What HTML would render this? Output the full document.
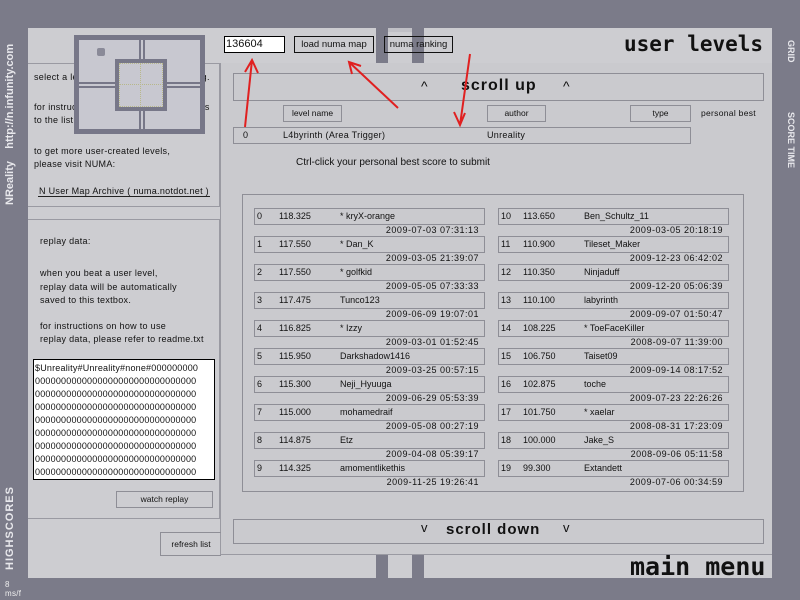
<!DOCTYPE html>
<html><head><meta charset="utf-8"><style>
*{margin:0;padding:0;box-sizing:border-box}
body{width:800px;height:600px;overflow:hidden;background:#7b7b89;position:relative;font-family:"Liberation Sans",sans-serif;color:#111;font-size:9px}
.a{position:absolute}
.p{background:#cdcdd1}
.bx{position:absolute;border:1px solid #8e8e96}
.t{position:absolute;white-space:nowrap;font-size:9px;letter-spacing:.3px}
.btn{position:absolute;border:1px solid #8e8e96;text-align:center;font-size:8.5px;line-height:15px}
.row{position:absolute;border:1px solid #8e8e96;height:17px;width:231px;font-size:9px;line-height:15px}
.row span{position:absolute}
.d{position:absolute;font-size:9px;text-align:right;width:225px;letter-spacing:.5px}
.vt{position:absolute;color:#e8e8ec;font-weight:bold;white-space:nowrap;transform-origin:0 0}
</style></head><body>
<div class="a p" style="left:28px;top:28px;width:744px;height:550px"></div>
<div class="a" style="left:220px;top:63px;width:552px;height:1px;background:#9a9aa2"></div>
<div class="a" style="left:376px;top:28px;width:12px;height:35px;background:#7b7b89"></div>
<div class="a" style="left:412px;top:28px;width:12px;height:35px;background:#7b7b89"></div>
<div class="a" style="left:388px;top:28px;width:24px;height:35px;background:#cdcdd1;border-top:4px solid #c0c0c6"></div>
<div class="a" style="left:220px;top:63px;width:552px;height:492px;background:#cacace;border-bottom:1px solid #9a9aa2;border-left:1px solid #9a9aa2"></div>
<div class="a" style="left:376px;top:555px;width:12px;height:23px;background:#7b7b89"></div>
<div class="a" style="left:412px;top:555px;width:12px;height:23px;background:#7b7b89"></div>
<div class="a" style="left:28px;top:63px;width:192px;height:144px;border-top:1px solid #9a9aa2;border-bottom:1px solid #9a9aa2;border-right:1px solid #9a9aa2"></div>
<div class="a" style="left:28px;top:219px;width:192px;height:300px;border-top:1px solid #9a9aa2;border-bottom:1px solid #9a9aa2;border-right:1px solid #9a9aa2"></div>

<div class="t" style="left:34px;top:72px">select a level from the list before playing.</div>
<div class="t" style="left:34px;top:102px">for instructions on how to add user levels</div>
<div class="t" style="left:34px;top:115px">to the list, refer to readme.txt</div>
<div class="t" style="left:34px;top:146px">to get more user-created levels,</div>
<div class="t" style="left:34px;top:159px">please visit NUMA:</div>
<div class="t" style="left:38px;top:186px;border-bottom:1px solid #222;padding:0 1px">N User Map Archive ( numa.notdot.net )</div>

<!-- minimap -->
<div class="a" style="left:74px;top:35px;width:131px;height:99px;background:#c8c8d0;border:5px solid #777788"></div>
<div class="a" style="left:139px;top:35px;width:6px;height:99px;border-left:2px solid #777788;border-right:2px solid #777788"></div>
<div class="a" style="left:74px;top:82px;width:131px;height:6px;border-top:2px solid #777788;border-bottom:2px solid #777788"></div>
<div class="a" style="left:115px;top:59px;width:52px;height:52px;border:4px solid #777788;background:#c8c8d0"></div>
<div class="a" style="left:119px;top:63px;width:44px;height:44px;border:1px dotted #b8b88a"></div>
<div class="a" style="left:140px;top:63px;width:1px;height:44px;border-left:1px dotted #b8b88a"></div>
<div class="a" style="left:119px;top:84px;width:44px;height:1px;border-top:1px dotted #b8b88a"></div>
<div class="a" style="left:97px;top:48px;width:8px;height:8px;background:#8a8a98;border-radius:2px"></div>

<div class="t" style="left:40px;top:236px">replay data:</div>
<div class="t" style="left:40px;top:268px">when you beat a user level,</div>
<div class="t" style="left:40px;top:282px">replay data will be automatically</div>
<div class="t" style="left:40px;top:295px">saved to this textbox.</div>
<div class="t" style="left:40px;top:321px">for instructions on how to use</div>
<div class="t" style="left:40px;top:334px">replay data, please refer to readme.txt</div>
<div class="a" style="left:33px;top:359px;width:182px;height:121px;background:#fff;border:1px solid #000;padding:2px 1px;font-size:9px;line-height:13px;overflow:hidden;letter-spacing:.2px">$Unreality#Unreality#none#000000000<br>0000000000000000000000000000000<br>0000000000000000000000000000000<br>0000000000000000000000000000000<br>0000000000000000000000000000000<br>0000000000000000000000000000000<br>0000000000000000000000000000000<br>0000000000000000000000000000000<br>0000000000000000000000000000000</div>
<div class="btn" style="left:116px;top:491px;width:97px;height:17px">watch replay</div>
<div class="btn" style="left:160px;top:532px;width:61px;height:24px;line-height:22px;border-right:none">refresh list</div>

<div class="a" style="left:224px;top:36px;width:61px;height:17px;background:#fff;border:1px solid #000;font-size:11px;line-height:15px;padding-left:1px">136604</div>
<div class="btn" style="left:294px;top:36px;width:80px;height:17px;border-color:#111;font-size:9.5px">load numa map</div>
<div class="btn" style="left:384px;top:36px;width:69px;height:17px;border-color:#111;font-size:9.5px">numa ranking</div>
<div class="t" style="left:624px;top:32px;font-size:21px;font-weight:bold;letter-spacing:0;font-family:'DejaVu Sans Mono',monospace">user levels</div>

<div class="bx" style="left:233px;top:73px;width:531px;height:28px"></div>
<div class="t" style="left:421px;top:78px;font-size:14px">^</div>
<div class="t" style="left:461px;top:77px;font-size:16px;font-weight:bold;letter-spacing:1px">scroll up</div>
<div class="t" style="left:563px;top:78px;font-size:14px">^</div>

<div class="btn" style="left:283px;top:105px;width:59px;height:17px">level name</div>
<div class="btn" style="left:487px;top:105px;width:59px;height:17px">author</div>
<div class="btn" style="left:630px;top:105px;width:61px;height:17px">type</div>
<div class="t" style="left:701px;top:108px;font-size:8.5px">personal best</div>

<div class="bx" style="left:233px;top:127px;width:458px;height:17px"></div>
<div class="t" style="left:243px;top:130px">0</div>
<div class="t" style="left:283px;top:130px">L4byrinth (Area Trigger)</div>
<div class="t" style="left:487px;top:130px">Unreality</div>
<div class="t" style="left:296px;top:157px;font-size:10px;letter-spacing:0">Ctrl-click your personal best score to submit</div>

<div class="bx" style="left:242px;top:194px;width:502px;height:298px"></div>
<div id="rows"></div>

<div class="bx" style="left:233px;top:519px;width:531px;height:25px"></div>
<div class="t" style="left:421px;top:520px;font-size:13px">v</div>
<div class="t" style="left:446px;top:521px;font-size:15px;font-weight:bold;letter-spacing:1px">scroll down</div>
<div class="t" style="left:563px;top:520px;font-size:13px">v</div>
<div class="t" style="left:630px;top:554px;font-size:25px;font-weight:bold;letter-spacing:0;font-family:'DejaVu Sans Mono',monospace;line-height:26px">main menu</div>

<div class="vt" style="left:4px;top:205px;transform:rotate(-90deg);font-size:11px">NReality&nbsp;&nbsp;&nbsp;&nbsp;http://n.infunity.com</div>
<div class="vt" style="left:4px;top:570px;transform:rotate(-90deg);font-size:11px;letter-spacing:1px">HIGHSCORES</div>
<div class="vt" style="left:796px;top:40px;transform:rotate(90deg);font-size:9px">GRID</div>
<div class="vt" style="left:796px;top:112px;transform:rotate(90deg);font-size:9px">SCORE TIME</div>
<div class="t" style="left:5px;top:580px;font-size:8px;color:#eee;line-height:9px">8<br>ms/f</div>

<svg class="a" style="left:0;top:0" width="800" height="600">
<g stroke="#e02020" stroke-width="2" fill="none">
<path d="M245 127 L252 60 M245 72 L252 60 L258 73"/>
<path d="M398 108 L349 62 M352 74 L349 62 L361 66"/>
<path d="M470 54 L460 125 M454 112 L460 125 L465 113"/>
</g></svg>

<script>
var L=[["0","118.325","* kryX-orange","2009-07-03 07:31:13"],["1","117.550","* Dan_K","2009-03-05 21:39:07"],["2","117.550","* golfkid","2009-05-05 07:33:33"],["3","117.475","Tunco123","2009-06-09 19:07:01"],["4","116.825","* Izzy","2009-03-01 01:52:45"],["5","115.950","Darkshadow1416","2009-03-25 00:57:15"],["6","115.300","Neji_Hyuuga","2009-06-29 05:53:39"],["7","115.000","mohamedraif","2009-05-08 00:27:19"],["8","114.875","Etz","2009-04-08 05:39:17"],["9","114.325","amomentlikethis","2009-11-25 19:26:41"]];
var R=[["10","113.650","Ben_Schultz_11","2009-03-05 20:18:19"],["11","110.900","Tileset_Maker","2009-12-23 06:42:02"],["12","110.350","Ninjaduff","2009-12-20 05:06:39"],["13","110.100","labyrinth","2009-09-07 01:50:47"],["14","108.225","* ToeFaceKiller","2008-09-07 11:39:00"],["15","106.750","Taiset09","2009-09-14 08:17:52"],["16","102.875","toche","2009-07-23 22:26:26"],["17","101.750","* xaelar","2008-08-31 17:23:09"],["18","100.000","Jake_S","2008-09-06 05:11:58"],["19","99.300","Extandett","2009-07-06 00:34:59"]];
var h="";
function add(a,x){for(var i=0;i<10;i++){var y=208+i*28;h+='<div class="row" style="left:'+x+'px;top:'+y+'px"><span style="left:2px">'+a[i][0]+'</span><span style="left:24px">'+a[i][1]+'</span><span style="left:85px">'+a[i][2]+'</span></div><div class="d" style="left:'+(x)+'px;top:'+(y+17)+'px">'+a[i][3]+'</div>';}}
add(L,254);add(R,498);
document.getElementById("rows").outerHTML=h;
</script>
</body></html>
